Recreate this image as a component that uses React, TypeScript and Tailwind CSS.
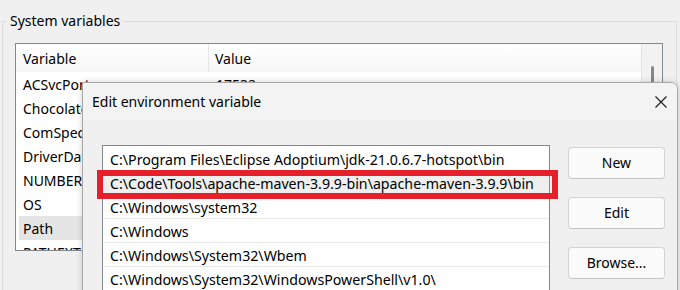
import React from "react";

const leftRows: [string, string][] = [
  ["ACSvcPort", "17532"],
  ["ChocolateyInstall", "C:\\ProgramData\\chocolatey"],
  ["ComSpec", "C:\\Windows\\system32\\cmd.exe"],
  ["DriverData", "C:\\Windows\\System32\\Drivers\\DriverData"],
  ["NUMBER_OF_PROCESSORS", "16"],
  ["OS", "Windows_NT"],
  ["Path", "C:\\Program Files\\Eclipse Adoptium\\jdk-21"],
  ["PATHEXT", ".COM;.EXE;.BAT;.CMD"],
];

const pathRows = [
  "C:\\Program Files\\Eclipse Adoptium\\jdk-21.0.6.7-hotspot\\bin",
  "C:\\Code\\Tools\\apache-maven-3.9.9-bin\\apache-maven-3.9.9\\bin",
  "C:\\Windows\\system32",
  "C:\\Windows",
  "C:\\Windows\\System32\\Wbem",
  "C:\\Windows\\System32\\WindowsPowerShell\\v1.0\\",
];

function Btn({ label }: { label: string }) {
  return (
    <button className="w-[97px] h-[32px] rounded-[4px] border border-[#d3d3d3] border-b-[#c2c2c2] bg-[#fbfbfb] text-[14px] text-black flex items-center justify-center leading-none">
      {label}
    </button>
  );
}

export default function App() {
  return (
    <div
      className="relative w-[680px] h-[290px] overflow-hidden bg-[#f0f0f0] text-black"
      style={{ fontFamily: "'Noto Sans', 'Open Sans', sans-serif" }}
    >
      {/* Group box */}
      <div className="absolute left-[2px] top-[21px] w-[675px] h-[300px] border border-[#dcdcdc]" />
      <div className="absolute left-[7px] top-[11px] px-[3px] bg-[#f0f0f0] text-[14px] leading-[20px]">
        System variables
      </div>

      <div className="pt-[43px] pl-[15px]">
        {/* List view */}
        <div className="w-[648px] h-[208px] border border-[#828790] bg-white flex overflow-hidden">
          <div className="flex-1 flex flex-col">
            <div className="h-[28px] flex items-center bg-gradient-to-b from-white to-[#f7f7f7] text-[14px] shrink-0">
              <div className="w-[193px] pl-[7px] h-full flex items-center border-r border-[#e5e5e5]">Variable</div>
              <div className="pl-[6px]">Value</div>
            </div>
            {leftRows.map(([n, v]) => (
              <div
                key={n}
                className={`h-[24px] shrink-0 flex items-center text-[14px] ml-[3px] ${n === "Path" ? "bg-[#e5e5e5]" : ""}`}
              >
                <div className="w-[190px] pl-[4px] whitespace-nowrap overflow-hidden">{n}</div>
                <div className="pl-[7px] whitespace-nowrap overflow-hidden">{v}</div>
              </div>
            ))}
          </div>
          <div className="w-[21px] border-l border-[#e3e3e3] bg-[#f2f2f2] flex justify-center pt-[22px] pl-[1px]">
            <div className="w-[3px] h-[140px] rounded-full bg-[#868686]" />
          </div>
        </div>
      </div>

      {/* Dialog */}
      <div className="absolute left-[82px] top-[82px] w-[596px] h-[240px] border border-[#a8a8a8] rounded-tr-[7px] bg-[#f0f0f0] shadow-[0_0_6px_rgba(0,0,0,0.18)] flex flex-col overflow-hidden">
        <div className="h-[37px] bg-[#f3f3f3] flex items-center justify-between pl-[9px] pr-[10px] shrink-0">
          <span className="text-[14px]">Edit environment variable</span>
          <svg width="12" height="12" viewBox="0 0 12 12">
            <path d="M0.5 0.5 L11.5 11.5 M11.5 0.5 L0.5 11.5" stroke="#1a1a1a" strokeWidth="1.1" fill="none" />
          </svg>
        </div>
        <div className="flex pl-[19px] pt-[25px] gap-[18px]">
          <div className="w-[448px] h-[200px] border border-[#828790] bg-white pt-[1px] shrink-0 overflow-hidden">
            {pathRows.map((p, i) => (
              <div
                key={p}
                className={`h-[24px] flex items-center pl-[7px] pt-[2px] border-b border-[#ebebeb] text-[14.2px] whitespace-nowrap ${i === 1 ? "bg-[#efefef]" : ""}`}
              >
                {p}
              </div>
            ))}
          </div>
          <div className="flex flex-col gap-[18px] pt-[2px]">
            <Btn label="New" />
            <Btn label="Edit" />
            <Btn label="Browse..." />
          </div>
        </div>
      </div>

      {/* Red annotation box */}
      <div className="absolute left-[97px] top-[170px] w-[461px] h-[29px] border-[6px] border-[#e5202a]" />
    </div>
  );
}
